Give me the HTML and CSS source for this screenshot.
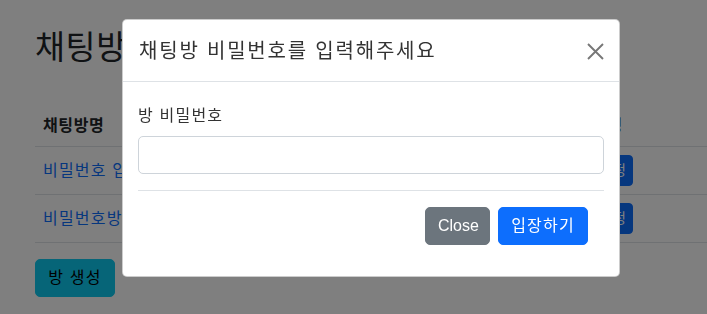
FILE: index.html
```html
<!DOCTYPE html>
<html lang="ko">
<head>
    <meta charset="UTF-8">
    <meta name="viewport" content="width=device-width, initial-scale=1.0">
    <title>채팅방 목록</title>
    <link rel="stylesheet" href="styles.css">
</head>
<body>

<div class="container">
    <h1>채팅방 목록</h1>

    <table class="room-table">
        <colgroup>
            <col class="col-name">
            <col class="col-enter">
            <col class="col-rest">
        </colgroup>
        <thead>
            <tr>
                <th>채팅방명</th>
                <th>수정</th>
                <th></th>
            </tr>
        </thead>
        <tbody>
            <tr>
                <td><a href="#">비밀번호 입력방</a></td>
                <td><button class="btn btn-primary btn-sm">수정</button></td>
                <td></td>
            </tr>
            <tr>
                <td><a href="#">비밀번호방</a></td>
                <td><button class="btn btn-primary btn-sm">수정</button></td>
                <td></td>
            </tr>
        </tbody>
    </table>

    <button class="btn btn-info">방 생성</button>
</div>

<!-- Password Modal -->
<div class="modal-backdrop"></div>
<div class="modal">
    <div class="modal-header">
        <h5 class="modal-title">채팅방 비밀번호를 입력해주세요</h5>
        <button class="btn-close" type="button" aria-label="Close">
            <svg width="17" height="17" viewBox="0 0 17 17">
                <path d="M1 1 L16 16 M16 1 L1 16" stroke="#777" stroke-width="1.9" fill="none"/>
            </svg>
        </button>
    </div>
    <div class="modal-body">
        <label for="roomPassword">방 비밀번호</label>
        <input type="password" id="roomPassword" class="form-control">
        <hr>
        <div class="modal-actions">
            <button class="btn btn-secondary" type="button">Close</button>
            <button class="btn btn-primary" type="button">입장하기</button>
        </div>
    </div>
</div>

</body>
</html>
```

FILE: styles.css
```css
* {
    margin: 0;
    padding: 0;
    box-sizing: border-box;
}
body {
    font-family: "Liberation Sans", "Noto Sans CJK KR", sans-serif;
    font-size: 16px;
    line-height: 1.5;
    letter-spacing: 0.075em;
    color: #212529;
    background: #fff;
    overflow: hidden;
    height: 314px;
}
.container {
    padding: 28px 0 0 35px;
    width: 740px;
}
h1 {
    font-size: 32.6px;
    font-weight: 400;
    line-height: 1.2;
    letter-spacing: 0.02em;
    margin-bottom: 39px;
}
.room-table {
    width: 705px;
    border-collapse: collapse;
    table-layout: fixed;
    margin-bottom: 16px;
}
.col-name {
    width: 549px;
}
.col-enter {
    width: 60px;
}
.room-table th,
.room-table td {
    padding: 8px;
    text-align: left;
    vertical-align: middle;
    border-bottom: 1px solid #dee2e6;
    white-space: nowrap;
}
.room-table th {
    font-weight: 700;
    letter-spacing: 0.04em;
}
.room-table a {
    color: #0d6efd;
    text-decoration: none;
}
.btn {
    display: inline-block;
    font-family: inherit;
    font-size: 16px;
    line-height: 1.5;
    letter-spacing: inherit;
    padding: 6px 12px;
    border: 1px solid transparent;
    border-radius: 5px;
    cursor: pointer;
}
.btn-sm {
    font-size: 14px;
    padding: 4px 6px;
    width: 41px;
    border-radius: 4px;
}
.btn-primary {
    background: #0d6efd;
    border-color: #0d6efd;
    color: #fff;
}
.btn-secondary {
    background: #6c757d;
    border-color: #6c757d;
    color: #fff;
    letter-spacing: normal;
    width: 65px;
}
.btn-info {
    background: #0dcaf0;
    border-color: #0dcaf0;
    color: #000;
    width: 80px;
    padding: 6px 0;
}
.modal-backdrop {
    position: fixed;
    inset: 0;
    background: rgba(0, 0, 0, 0.5);
}
.modal {
    position: fixed;
    left: 122px;
    top: 19px;
    width: 498px;
    background: #fff;
    border: 1px solid rgba(0, 0, 0, 0.2);
    border-radius: 5px;
}
.modal-header {
    display: flex;
    align-items: center;
    justify-content: space-between;
    padding: 16px 15px 15px 16px;
    border-bottom: 1px solid #dee2e6;
}
.modal-title {
    font-size: 20px;
    font-weight: 400;
    line-height: 1.5;
    letter-spacing: 0.09em;
    color: #333;
}
.btn-close {
    display: flex;
    border: none;
    background: none;
    padding: 0;
    cursor: pointer;
}
.modal-body {
    padding: 22px 15px 16px 15px;
}
.modal-body label {
    display: block;
    margin-bottom: 8px;
    color: #333;
}
.form-control {
    display: block;
    width: 100%;
    height: 38px;
    padding: 6px 12px;
    font-size: 16px;
    border: 1px solid #ced4da;
    border-radius: 5px;
}
hr {
    border: none;
    border-top: 1px solid #dee2e6;
    margin: 16px 0;
}
.modal-actions {
    display: flex;
    justify-content: flex-end;
    gap: 8px;
    padding-right: 16px;
    margin-bottom: 15px;
}
.modal-actions .btn-primary {
    width: 90px;
    padding: 6px 0;
}
```
